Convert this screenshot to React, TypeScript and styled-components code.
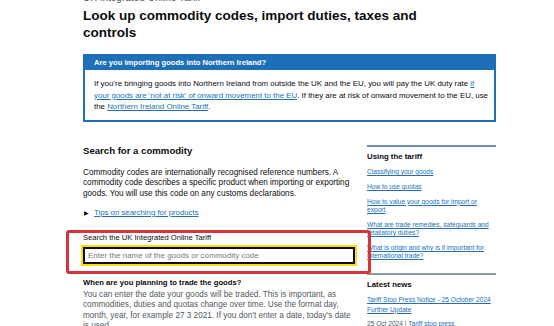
import React from "react";
import styled, { createGlobalStyle } from "styled-components";

const Global = createGlobalStyle`
  html, body { margin: 0; padding: 0; background: #fff; }
  body {
    font-family: "Liberation Sans", Arial, sans-serif;
    color: #0b0c0c;
    overflow: hidden;
  }
`;

const Page = styled.main`
  width: 413px;
  margin: -8px 0 0 83px;
`;

const Caption = styled.span`
  display: block;
  font-size: 10px;
  line-height: 12px;
  color: #505a5f;
`;

const Title = styled.h1`
  margin: 3px 0 0;
  max-width: 360px;
  font-size: 13.5px;
  line-height: 17px;
  font-weight: 700;
`;

const Banner = styled.section`
  margin-top: 13px;
  border: 2px solid #1d70b8;
`;

const BannerHeader = styled.div`
  background: #1d70b8;
  color: #fff;
  font-weight: 700;
  font-size: 7.6px;
  line-height: 10px;
  padding: 2px 9px;
`;

const BannerBody = styled.p`
  margin: 0;
  padding: 8px 5px 7px 9px;
  font-size: 7.9px;
  line-height: 11.5px;
`;

const Link = styled.a`
  color: #1d70b8;
  text-decoration: underline;
  text-decoration-thickness: 1px;
  text-underline-offset: 1px;
`;

const Grid = styled.div`
  display: grid;
  grid-template-columns: 272px 129px;
  column-gap: 12px;
  margin-top: 23px;
  align-items: start;
`;

const Column = styled.div`
  display: flex;
  flex-direction: column;
`;

const SectionTitle = styled.h2`
  margin: 0;
  font-size: 9.6px;
  line-height: 12px;
  font-weight: 700;
`;

const Body = styled.p<{ $hint?: boolean; $top: number }>`
  margin: ${(p) => p.$top}px 0 0;
  font-size: 8.2px;
  line-height: 10.5px;
  color: ${(p) => (p.$hint ? "#505a5f" : "#0b0c0c")};
`;

const Details = styled.div`
  margin-top: 9px;
  display: flex;
  align-items: center;
  gap: 5px;
  font-size: 7.8px;
  line-height: 10px;
`;

const Arrow = styled.span`
  font-size: 5.5px;
  line-height: 10px;
  padding-left: 1px;
`;

const FormGroup = styled.div`
  position: relative;
  margin-top: 15px;
  display: flex;
  flex-direction: column;
`;

const Label = styled.label`
  font-size: 7.6px;
  line-height: 10px;
`;

const Input = styled.input`
  margin-top: 3.5px;
  box-sizing: border-box;
  width: 100%;
  height: 17px;
  border: 2px solid #0b0c0c;
  outline: 2px solid #ffdd00;
  padding: 0 3px;
  font-family: "Liberation Sans", Arial, sans-serif;
  font-size: 8px;
  color: #0b0c0c;
  background: #fff;
  &::placeholder { color: #7a7a7a; }
`;

const Highlight = styled.div`
  position: absolute;
  left: -17px;
  top: -3px;
  width: 305px;
  height: 44px;
  box-sizing: border-box;
  border: 3px solid #d4363a;
  border-radius: 3px;
  pointer-events: none;
`;

const Question = styled.h3`
  margin: 14px 0 0;
  font-size: 7.7px;
  line-height: 10px;
  font-weight: 700;
`;

const Side = styled.aside<{ $gray?: boolean; $top?: number }>`
  margin-top: ${(p) => p.$top ?? 0}px;
  border-top: 2px solid ${(p) => (p.$gray ? "#8d9aa4" : "#6f90b3")};
  padding-top: 5px;
`;

const SideTitle = styled.h2`
  margin: 0;
  font-size: 7.8px;
  line-height: 10px;
  font-weight: 700;
`;

const SideList = styled.ul`
  list-style: none;
  margin: 6.5px 0 0;
  padding: 0;
`;

const SideItem = styled.li`
  font-size: 6.6px;
  line-height: 8.3px;
  margin-bottom: 6.6px;
`;

const Meta = styled.p`
  margin: 5px 0 0;
  font-size: 6.6px;
  line-height: 9px;
  color: #505a5f;
`;

const NewsLink = styled.p`
  margin: 5px 0 0;
  font-size: 6.6px;
  line-height: 9.5px;
`;

export default function App() {
  return (
    <>
      <Global />
      <Page>
        <Caption>UK Integrated Online Tariff</Caption>
        <Title>Look up commodity codes, import duties, taxes and controls</Title>
        <Banner>
          <BannerHeader>Are you importing goods into Northern Ireland?</BannerHeader>
          <BannerBody>
            If you’re bringing goods into Northern Ireland from outside the UK and the EU, you will pay the UK duty rate{" "}
            <Link href="#">if your goods are ‘not at risk’ of onward movement to the EU</Link>. If they are at risk of
            onward movement to the EU, use the <Link href="#">Northern Ireland Online Tariff</Link>.
          </BannerBody>
        </Banner>
        <Grid>
          <Column>
            <SectionTitle>Search for a commodity</SectionTitle>
            <Body $top={11}>
              Commodity codes are internationally recognised reference numbers. A commodity code describes a specific
              product when importing or exporting goods. You will use this code on any customs declarations.
            </Body>
            <Details>
              <Arrow>▶</Arrow>
              <Link href="#">Tips on searching for products</Link>
            </Details>
            <FormGroup>
              <Label>Search the UK Integrated Online Tariff</Label>
              <Input placeholder="Enter the name of the goods or commodity code" />
              <Highlight />
            </FormGroup>
            <Question>When are you planning to trade the goods?</Question>
            <Body $hint $top={2}>
              You can enter the date your goods will be traded. This is important, as commodities, duties and quotas
              change over time. Use the format day, month, year, for example 27 3 2021. If you don't enter a date,
              today's date is used.
            </Body>
          </Column>
          <Column>
            <Side>
              <SideTitle>Using the tariff</SideTitle>
              <SideList>
                <SideItem><Link href="#">Classifying your goods</Link></SideItem>
                <SideItem><Link href="#">How to use quotas</Link></SideItem>
                <SideItem><Link href="#">How to value your goods for import or export</Link></SideItem>
                <SideItem><Link href="#">What are trade remedies, safeguards and retaliatory duties?</Link></SideItem>
                <SideItem><Link href="#">What is origin and why is it important for international trade?</Link></SideItem>
              </SideList>
            </Side>
            <Side $gray $top={6}>
              <SideTitle>Latest news</SideTitle>
              <NewsLink><Link href="#">Tariff Stop Press Notice - 25 October 2024 Further Update</Link></NewsLink>
              <Meta>25 Oct 2024 | <Link href="#">Tariff stop press</Link></Meta>
            </Side>
          </Column>
        </Grid>
      </Page>
    </>
  );
}
